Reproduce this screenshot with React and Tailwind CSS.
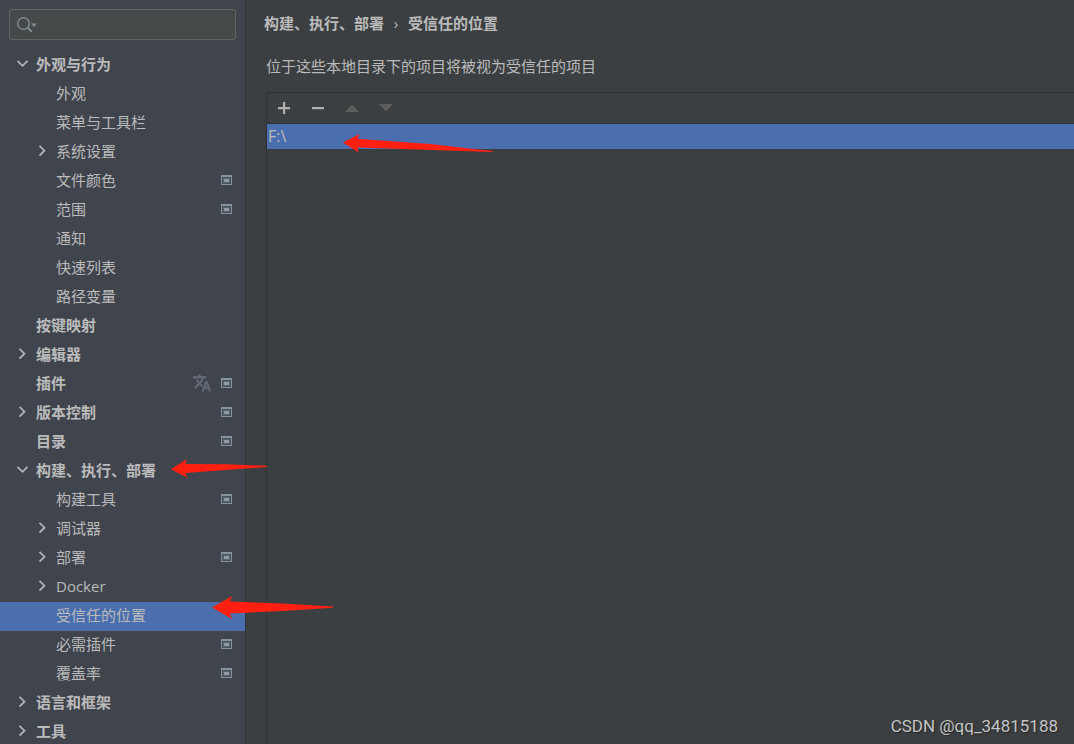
import React from "react";

const tree = [
  { label: "外观与行为", level: 0, state: "open" },
  { label: "外观", level: 1 },
  { label: "菜单与工具栏", level: 1 },
  { label: "系统设置", level: 1, state: "closed" },
  { label: "文件颜色", level: 1, project: true },
  { label: "范围", level: 1, project: true },
  { label: "通知", level: 1 },
  { label: "快速列表", level: 1 },
  { label: "路径变量", level: 1 },
  { label: "按键映射", level: 0 },
  { label: "编辑器", level: 0, state: "closed" },
  { label: "插件", level: 0, project: true, translate: true },
  { label: "版本控制", level: 0, state: "closed", project: true },
  { label: "目录", level: 0, project: true },
  { label: "构建、执行、部署", level: 0, state: "open" },
  { label: "构建工具", level: 1, project: true },
  { label: "调试器", level: 1, state: "closed" },
  { label: "部署", level: 1, state: "closed", project: true },
  { label: "Docker", level: 1, state: "closed" },
  { label: "受信任的位置", level: 1, selected: true },
  { label: "必需插件", level: 1, project: true },
  { label: "覆盖率", level: 1, project: true },
  { label: "语言和框架", level: 0, state: "closed" },
  { label: "工具", level: 0, state: "closed" },
];

function Chevron({ state }) {
  return (
    <svg className="size-4 shrink-0" viewBox="0 0 16 16" fill="none" stroke="#b4b7ba" strokeWidth="1.7" aria-hidden="true">
      {state === "open" && <path d="M3.5 4.8 8.5 9.8 13.5 4.8" />}
      {state === "closed" && <path d="M5.5 2.8 10.5 7.7 5.5 12.6" />}
    </svg>
  );
}

function ProjectIcon() {
  return (
    <svg className="h-2.5 w-[11px] shrink-0" viewBox="0 0 11 10" aria-hidden="true">
      <path fill="#87939a" d="M0 0h11v10H0z" />
      <path fill="#464e57" d="M1 2h9v7H1z" />
      <path fill="#5c666f" d="M2 3h7v5H2z" />
      <path fill="#8f9aa2" d="M3 4h5v3H3z" />
    </svg>
  );
}

function TranslateIcon() {
  return (
    <svg className="size-[18px] shrink-0" viewBox="1 1 22 22" fill="#646b74" stroke="#646b74" strokeWidth="0.7" aria-hidden="true">
      <path d="M12.87 15.07l-2.54-2.51.03-.03c1.74-1.94 2.98-4.17 3.71-6.53H17V4h-7V2H8v2H1v1.99h11.17C11.5 7.92 10.44 9.75 9 11.35 8.07 10.32 7.3 9.19 6.69 8h-2c.73 1.63 1.73 3.17 2.98 4.56l-5.09 5.02L4 19l5-5 3.11 3.11.76-2.04zM18.5 10h-2L12 22h2l1.12-3h4.75L21 22h2l-4.5-12zm-2.62 7l1.62-4.33L19.12 17h-3.24z" />
    </svg>
  );
}

function TreeRow({ item }) {
  return (
    <li>
      <button
        type="button"
        aria-expanded={item.state ? item.state === "open" : undefined}
        aria-current={item.selected ? "page" : undefined}
        className={`flex h-[29px] w-full items-center pr-[13px] pb-1 text-left ${item.level ? "pl-[34px]" : "pl-3.5 font-bold"} ${item.selected ? "bg-[#4b6eaf]" : ""}`}
      >
        <Chevron state={item.state} />
        <span className="ml-1.5 flex-1">{item.label}</span>
        <span className="flex items-center gap-2.5">
          {item.translate && <TranslateIcon />}
          {item.project && <ProjectIcon />}
        </span>
      </button>
    </li>
  );
}

function Toolbar() {
  return (
    <div className="flex h-[31px] items-center gap-[18px] border-b border-[#313335] pl-[9px]">
      <button type="button" aria-label="添加" className="size-4">
        <svg viewBox="0 0 16 16" className="size-4" fill="#afb1b3">
          <path d="M7 2h2.2v5H14v2.2H9.2V14H7V9.2H2V7h5z" />
        </svg>
      </button>
      <button type="button" aria-label="移除" className="size-4">
        <svg viewBox="0 0 16 16" className="size-4" fill="#afb1b3">
          <path d="M2 7h12v2.2H2z" />
        </svg>
      </button>
      <button type="button" disabled aria-label="上移" className="size-4">
        <svg viewBox="0 0 16 16" className="size-4" fill="#5b5d5f">
          <path d="M1 12 8 4.5 15 12z" />
        </svg>
      </button>
      <button type="button" disabled aria-label="下移" className="size-4">
        <svg viewBox="0 0 16 16" className="size-4" fill="#5b5d5f">
          <path d="M1 4h14L8 11.5z" />
        </svg>
      </button>
    </div>
  );
}

export default function App() {
  return (
    <div className="relative flex h-screen overflow-hidden bg-[#3c3f41] font-['Open_Sans','Noto_Sans_CJK_SC',sans-serif] text-[15px] leading-5 text-[#bbbbbb]">
      <aside className="flex w-[246px] shrink-0 flex-col border-r border-[#323232] bg-[#40444d]">
        <div className="px-[9px] pt-[9px] pb-[11px]">
          <label className="flex h-[31px] items-center rounded-[3px] border border-[#646464] bg-[#45494a] pl-[7px]">
            <svg className="h-4 w-5 shrink-0" viewBox="0 0 20 16" fill="none" stroke="#87939a" aria-hidden="true">
              <circle cx="6.5" cy="6.5" r="5.8" strokeWidth="1.3" />
              <path d="m10.7 10.7 4.1 4.1" strokeWidth="1.8" />
              <path d="M14 6.5h6L17 10z" fill="#7f8b91" stroke="none" />
            </svg>
            <input type="search" aria-label="搜索设置" className="min-w-0 flex-1 bg-transparent outline-none" />
          </label>
        </div>
        <nav aria-label="设置" className="min-h-0 flex-1 overflow-hidden">
          <ul>
            {tree.map((item) => (
              <TreeRow key={item.label} item={item} />
            ))}
          </ul>
        </nav>
      </aside>

      <main className="flex min-w-0 flex-1 flex-col">
        <h1 className="flex h-12 items-center pb-0.5 pl-[18px] font-bold">
          <span>构建、执行、部署</span>
          <span className="w-6 text-center font-normal">›</span>
          <span>受信任的位置</span>
        </h1>
        <p className="h-11 pt-2 pl-5">位于这些本地目录下的项目将被视为受信任的项目</p>
        <section className="ml-5 flex-1 border-t border-l border-[#313335]">
          <Toolbar />
          <ul>
            <li className="h-[25px] bg-[#4b6eaf] pl-px text-base leading-[25px]">F:\</li>
          </ul>
        </section>
      </main>

      <svg className="pointer-events-none absolute top-[133px] left-[343px] h-5 w-[151px]" viewBox="0 0 151 20" fill="#ff2012" aria-hidden="true">
        <path d="M0 9.5 16.5 1 14.5 5.8 90 11.3 130 16 150 18 149 18.9 60 16 14.5 14.6 15.5 19.5z" />
      </svg>
      <svg className="pointer-events-none absolute top-[458px] left-[171px] h-5 w-24" viewBox="0 0 96 20" fill="#ff2012" aria-hidden="true">
        <path d="M0 11.2 16 1 14.5 6 55 6.3 96 7.8V9L55 12 14.5 15 16.5 20z" />
      </svg>
      <svg className="pointer-events-none absolute top-[595px] left-[212px] h-6 w-[121px]" viewBox="0 0 121 24" fill="#ff2012" aria-hidden="true">
        <path d="M0 12.5 20 1 18 6.5 70 8.5 121 11.4V12.8L70 16 18 18.5 20 24z" />
      </svg>
      <p className="absolute right-4 bottom-2 font-['Roboto',sans-serif] text-[17px] text-[#c4c5c6] [text-shadow:1px_1px_1px_#222]">CSDN @qq_34815188</p>
    </div>
  );
}
